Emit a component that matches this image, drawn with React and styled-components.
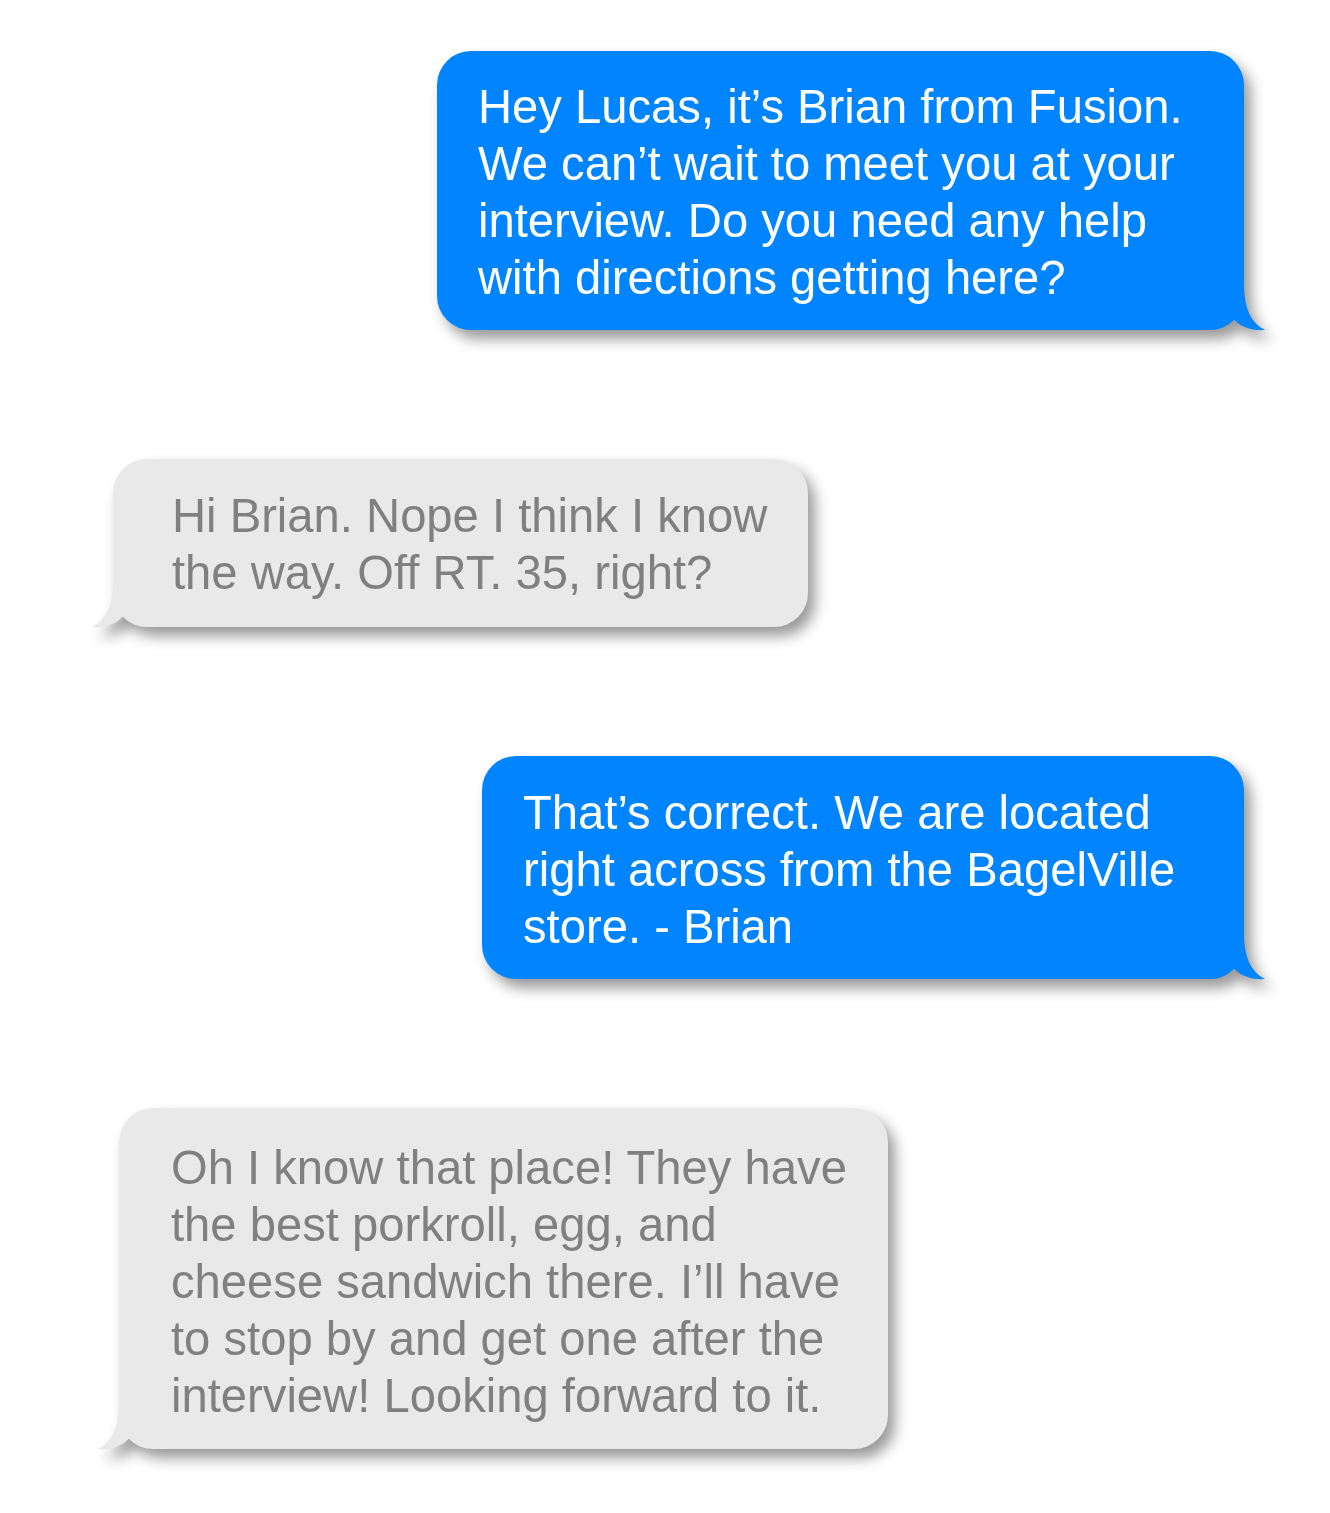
import React from 'react';
import styled, { createGlobalStyle } from 'styled-components';

const GlobalStyle = createGlobalStyle`
  html, body {
    margin: 0;
    padding: 0;
    background: #ffffff;
  }
  body {
    font-family: "Liberation Sans", Arial, Helvetica, sans-serif;
  }
`;

const Page = styled.div`
  width: 1330px;
  min-height: 1513px;
  box-sizing: border-box;
  padding: 51px 0 64px;
  display: flex;
  flex-direction: column;
  gap: 129px;
`;

const Row = styled.div`
  display: flex;
  justify-content: ${(p) => (p.$sent ? 'flex-end' : 'flex-start')};
  padding-left: ${(p) => p.$offset || 0}px;
  padding-right: ${(p) => (p.$sent ? 86 : 0)}px;
`;

const BubbleWrap = styled.div`
  position: relative;
  filter: drop-shadow(7px 9px 7px rgba(0, 0, 0, 0.4));
`;

const Bubble = styled.div`
  width: ${(p) => p.$width}px;
  box-sizing: border-box;
  padding: ${(p) => p.$pt}px 0 ${(p) => p.$pb}px ${(p) => p.$pl}px;
  border-radius: 34px;
  background: ${(p) => (p.$sent ? '#0084ff' : '#e9e9e9')};
  color: ${(p) => (p.$sent ? '#ffffff' : '#808080')};
  font-size: 47.2px;
  line-height: 57px;
`;

const Line = styled.div`
  white-space: nowrap;
`;

const Tail = styled.svg`
  position: absolute;
  bottom: -1px;
  width: 44px;
  height: 47px;
  ${(p) => (p.$sent ? 'right: -22px;' : 'left: -22px; transform: scaleX(-1);')}
`;

const messages = [
  {
    sent: true,
    width: 807,
    pt: 27,
    pb: 24,
    pl: 41,
    lines: [
      'Hey Lucas, it\u2019s Brian from Fusion.',
      'We can\u2019t wait to meet you at your',
      'interview. Do you need any help',
      'with directions getting here?',
    ],
  },
  {
    sent: false,
    offset: 113,
    width: 695,
    pt: 28,
    pb: 26,
    pl: 59,
    lines: ['Hi Brian. Nope I think I know', 'the way. Off RT. 35, right?'],
  },
  {
    sent: true,
    width: 762,
    pt: 28,
    pb: 24,
    pl: 41,
    lines: [
      'That\u2019s correct. We are located',
      'right across from the BagelVille',
      'store. - Brian',
    ],
  },
  {
    sent: false,
    offset: 119,
    width: 769,
    pt: 31,
    pb: 25,
    pl: 52,
    lines: [
      'Oh I know that place! They have',
      'the best porkroll, egg, and',
      'cheese sandwich there. I\u2019ll have',
      'to stop by and get one after the',
      'interview! Looking forward to it.',
    ],
  },
];

const BubbleTail = ({ sent }) => (
  <Tail $sent={sent} viewBox="0 0 44 47">
    <path
      d="M0 0 L22 0 C22 24 29 39 43 46 C31 47 17 43 11 34 L0 34 Z"
      fill={sent ? '#0084ff' : '#e9e9e9'}
    />
  </Tail>
);

const App = () => (
  <>
    <GlobalStyle />
    <Page>
      {messages.map((m, i) => (
        <Row key={i} $sent={m.sent} $offset={m.offset}>
          <BubbleWrap>
            <Bubble $sent={m.sent} $width={m.width} $pt={m.pt} $pb={m.pb} $pl={m.pl}>
              {m.lines.map((l, j) => (
                <Line key={j}>{l}</Line>
              ))}
            </Bubble>
            <BubbleTail sent={m.sent} />
          </BubbleWrap>
        </Row>
      ))}
    </Page>
  </>
);

export default App;
